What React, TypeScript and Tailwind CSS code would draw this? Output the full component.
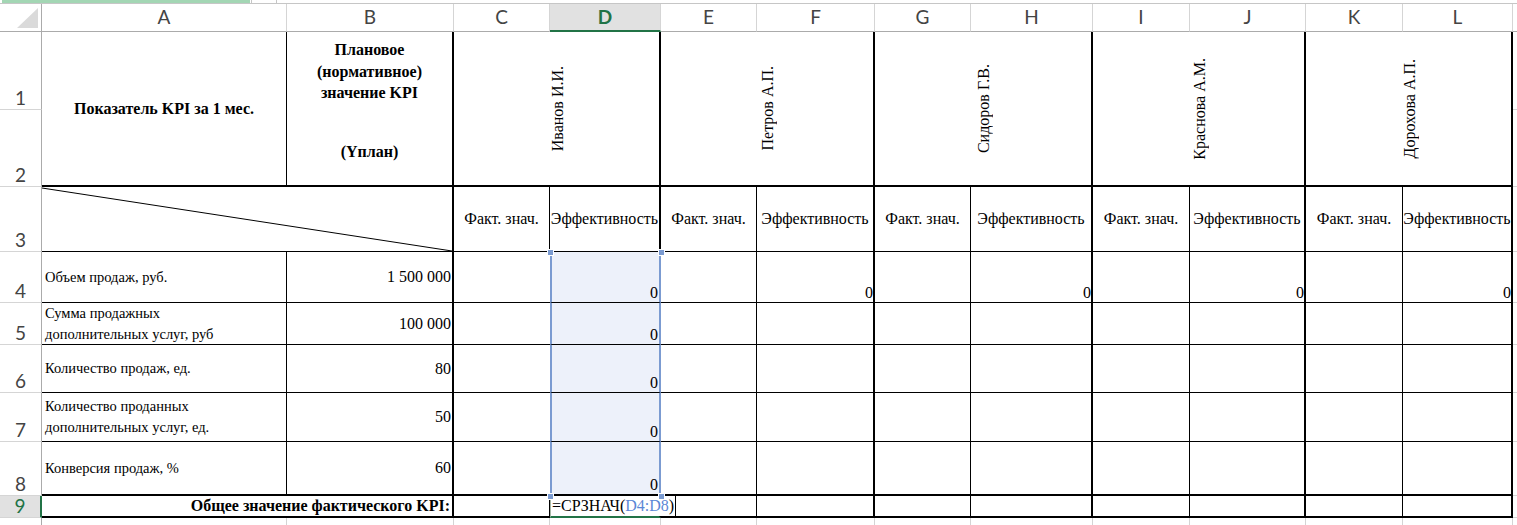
import React from "react";

type RowData = {
  n: string;
  label: React.ReactNode;
  plan: string;
  zeros: boolean[];
  last?: boolean;
};

const rows: RowData[] = [
  { n: "4", label: <>Объем продаж, руб.</>, plan: "1 500 000", zeros: [true, true, true, true, true] },
  {
    n: "5",
    label: (
      <>
        Сумма продажных
        <br />
        дополнительных услуг, руб
      </>
    ),
    plan: "100 000",
    zeros: [true, false, false, false, false],
  },
  { n: "6", label: <>Количество продаж, ед.</>, plan: "80", zeros: [true, false, false, false, false] },
  {
    n: "7",
    label: (
      <>
        Количество проданных
        <br />
        дополнительных услуг, ед.
      </>
    ),
    plan: "50",
    zeros: [true, false, false, false, false],
  },
  { n: "8", label: <>Конверсия продаж, %</>, plan: "60", zeros: [true, false, false, false, false], last: true },
];

const names = ["Иванов И.И.", "Петров А.П.", "Сидоров Г.В.", "Краснова А.М.", "Дорохова А.П."];
const letters = ["A", "B", "C", "D", "E", "F", "G", "H", "I", "J", "K", "L"];

function RowHdr({ n, active }: { n: string; active?: boolean }) {
  if (active) {
    return (
      <div className="flex items-end justify-center border-b border-r-2 border-b-[#d5d5d5] border-r-[#217346] bg-[#e1e1e1] pb-[1px] font-['Lato',sans-serif] text-[19px] leading-[20px] text-[#217346]">
        {n}
      </div>
    );
  }
  return (
    <div className="flex items-end justify-center border-b border-r border-b-[#d5d5d5] border-r-[#ababab] pb-[1px] font-['Lato',sans-serif] text-[19px] leading-[20px] text-[#444444]">
      {n}
    </div>
  );
}

function Gap() {
  return <div className="border-b border-[#d4d4d4]" />;
}

export default function App() {
  return (
    <div className="h-[525px] w-[1517px] overflow-hidden bg-white font-['Liberation_Serif','Times_New_Roman',serif] text-[16px] text-black">
      {/* remnant of the formula bar */}
      <div className="flex h-[4px] border-b border-[#c6c6c6]">
        <div className="ml-[2px] w-[248px] bg-[#a3d6b4]" />
        <div className="ml-[1px] w-[26px] border-x border-[#c6c6c6]" />
      </div>

      <div className="relative">
        <div className="grid grid-cols-[42px_245px_167px_96px_111px_96px_118px_96px_122px_97px_116px_97px_110px_1fr] grid-rows-[28px_78px_77px_65px_51px_42px_48px_49px_54px_22px_28px]">
          {/* column headers */}
          <div className="flex items-end justify-end border-b border-r border-[#ababab] pb-[3px] pr-[3px]">
            <svg width="21" height="20" viewBox="0 0 21 20">
              <polygon points="21,0 21,20 0,20" fill="#dadada" />
            </svg>
          </div>
          {letters.map((l) =>
            l === "D" ? (
              <div
                key={l}
                className="flex items-center justify-center border-b-2 border-r border-b-[#217346] border-r-[#d5d5d5] bg-[#e1e1e1] font-['Lato',sans-serif] text-[19px] font-bold text-[#217346]"
              >
                {l}
              </div>
            ) : (
              <div
                key={l}
                className="flex items-center justify-center border-b border-r border-b-[#ababab] border-r-[#d5d5d5] font-['Lato',sans-serif] text-[19px] text-[#444444]"
              >
                {l}
              </div>
            )
          )}
          <div className="border-b border-[#ababab]" />

          {/* rows 1-2 */}
          <RowHdr n="1" />
          <div className="row-span-2 flex items-center justify-center border-b-2 border-r border-black font-bold">
            Показатель KPI за 1 мес.
          </div>
          <div className="row-span-2 flex flex-col items-center border-b-2 border-r-2 border-black pt-[7px] text-center font-bold leading-[21.5px]">
            <span>Плановое</span>
            <span>(нормативное)</span>
            <span>значение KPI</span>
            <span className="mt-[37px]">(Yплан)</span>
          </div>
          {names.map((nm) => (
            <div
              key={nm}
              className="col-span-2 row-span-2 flex items-center justify-center border-b-2 border-r-2 border-black pl-[2px]"
            >
              <span className="rotate-180 whitespace-nowrap [writing-mode:vertical-rl]">{nm}</span>
            </div>
          ))}
          <Gap />
          <RowHdr n="2" />
          <Gap />

          {/* row 3 */}
          <RowHdr n="3" />
          <div className="relative col-span-2 border-b border-r-2 border-black">
            <svg className="absolute inset-0 h-full w-full" preserveAspectRatio="none">
              <line x1="0" y1="1" x2="100%" y2="100%" stroke="black" strokeWidth="1" />
            </svg>
          </div>
          {names.map((nm) => (
            <React.Fragment key={nm}>
              <div className="flex items-center justify-center whitespace-nowrap border-b border-r border-black">
                Факт. знач.
              </div>
              <div className="flex items-center justify-center whitespace-nowrap border-b border-r-2 border-black">
                Эффективность
              </div>
            </React.Fragment>
          ))}
          <Gap />

          {/* rows 4-8 */}
          {rows.map((r) => {
            const bb = r.last ? "border-b-2" : "border-b";
            return (
              <React.Fragment key={r.n}>
                <RowHdr n={r.n} />
                <div className={`flex items-center border-r border-black pl-[3px] text-[14.5px] leading-[21px] ${bb}`}>
                  <span>{r.label}</span>
                </div>
                <div className={`flex items-center justify-end border-r-2 border-black pr-[1px] ${bb}`}>{r.plan}</div>
                {r.zeros.map((z, i) =>
                  i === 0 ? (
                    <React.Fragment key={i}>
                      <div className={`border-black ${bb}`} />
                      <div
                        className={`flex items-end justify-end border-x-2 border-x-[#7b9bd1] border-b-black bg-[#edf1fa] pr-[1px] leading-[18px] ${bb}`}
                      >
                        {z ? "0" : ""}
                      </div>
                    </React.Fragment>
                  ) : (
                    <React.Fragment key={i}>
                      <div className={`border-r border-black ${bb}`} />
                      <div className={`flex items-end justify-end border-r-2 border-black leading-[18px] ${bb}`}>
                        {z ? "0" : ""}
                      </div>
                    </React.Fragment>
                  )
                )}
                <Gap />
              </React.Fragment>
            );
          })}

          {/* row 9 */}
          <RowHdr n="9" active />
          <div className="col-span-2 flex items-center justify-end border-b-2 border-r-2 border-black pr-[2px] font-bold">
            Общее значение фактического KPI:
          </div>
          <div className="border-b-2 border-r border-black" />
          <div className="relative border-b-2 border-l border-r-2 border-b-[#217346] border-l-[#a9b9a9] border-r-black">
            <div className="absolute left-0 top-0 z-10 flex h-full items-center whitespace-nowrap border-r border-black bg-white pl-[1px] pr-[1px]">
              =СРЗНАЧ(<span className="text-[#5b87d6]">D4:D8</span>)
            </div>
          </div>
          <div className="border-b-2 border-r border-black" />
          <div className="border-b-2 border-r-2 border-black" />
          <div className="border-b-2 border-r border-black" />
          <div className="border-b-2 border-r-2 border-black" />
          <div className="border-b-2 border-r border-black" />
          <div className="border-b-2 border-r-2 border-black" />
          <div className="border-b-2 border-r border-black" />
          <div className="border-b-2 border-r-2 border-black" />
          <Gap />

          {/* row 10 */}
          <RowHdr n="10" />
          {letters.map((l) => (
            <div key={l} className="border-b border-r border-[#d4d4d4]" />
          ))}
          <Gap />
        </div>

        {/* selection handles */}
        <div className="absolute left-[547px] top-[245px] z-20 size-[7px] border border-white bg-[#7b9bd1]" />
        <div className="absolute left-[658px] top-[245px] z-20 size-[7px] border border-white bg-[#7b9bd1]" />
        <div className="absolute left-[547px] top-[489px] z-20 size-[7px] border border-white bg-[#7b9bd1]" />
        <div className="absolute left-[658px] top-[489px] z-20 size-[7px] border border-white bg-[#7b9bd1]" />
      </div>
    </div>
  );
}
